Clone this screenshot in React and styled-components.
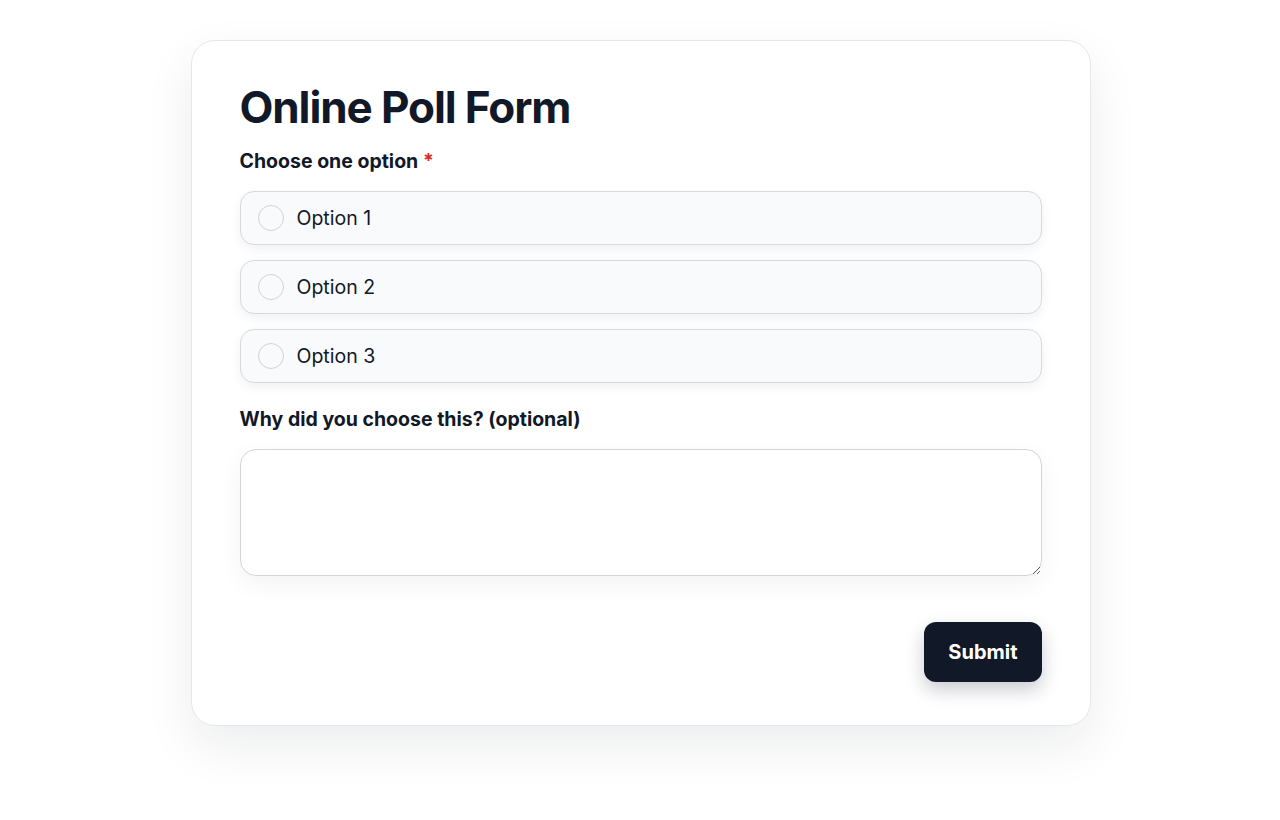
import React from 'react'
import styled, { createGlobalStyle } from 'styled-components'

const GlobalStyle = createGlobalStyle`
  * { box-sizing: border-box; }
  html, body {
    margin: 0;
    background: #ffffff;
    font-family: Inter, "Noto Sans", sans-serif;
    color: #111827;
  }
`

const Page = styled.div`
  min-height: 100vh;
  padding: 40px 0 40px 1px;
  display: flex;
  justify-content: center;
  align-items: flex-start;
`

const Card = styled.form`
  width: 900px;
  padding: 38px 48px 43px 48px;
  background: #ffffff;
  border: 1px solid #e5e7eb;
  border-radius: 24px;
  box-shadow: 0 20px 50px rgba(17, 24, 39, 0.08);
  display: flex;
  flex-direction: column;
`

const Title = styled.h1`
  margin: 0;
  font-size: 44px;
  line-height: 56px;
  font-weight: 700;
  letter-spacing: -0.025em;
  color: #111827;
`

const Label = styled.label`
  display: block;
  margin-top: ${props => props.top || '16px'};
  font-size: 19.5px;
  line-height: 24px;
  font-weight: 650;
  color: #111827;
`

const Required = styled.span`
  color: #dc2626;
`

const Options = styled.div`
  margin-top: 18px;
  display: flex;
  flex-direction: column;
  gap: 15px;
`

const OptionRow = styled.label`
  height: 54px;
  padding: 0 17px;
  display: flex;
  align-items: center;
  gap: 13px;
  background: #f9fafb;
  border: 1.5px solid #d6d9de;
  border-radius: 14px;
  box-shadow: 0 4px 12px rgba(17, 24, 39, 0.06);
  font-size: 19.5px;
  color: #111827;
  cursor: pointer;
`

const Radio = styled.input`
  appearance: none;
  margin: 0;
  width: 26px;
  height: 26px;
  border-radius: 50%;
  border: 1.5px solid #cfd3d9;
  background: #f9fafb;
  flex: none;
`

const TextArea = styled.textarea`
  margin-top: 18px;
  width: 100%;
  height: 127px;
  border: 1.5px solid #d1d5db;
  border-radius: 16px;
  background: #ffffff;
  box-shadow: 0 8px 24px rgba(17, 24, 39, 0.05);
  resize: vertical;
  font: inherit;
  padding: 12px 16px;
  outline: none;
`

const Footer = styled.div`
  margin-top: 46px;
  display: flex;
  justify-content: flex-end;
`

const SubmitButton = styled.button`
  height: 60px;
  padding: 0 24px;
  border: none;
  border-radius: 12px;
  background: #111827;
  color: #ffffff;
  font-family: inherit;
  font-size: 20px;
  font-weight: 700;
  box-shadow: 0 8px 18px rgba(17, 24, 39, 0.22);
  cursor: pointer;
`

const options = ['Option 1', 'Option 2', 'Option 3']

const App = () => {
  return (
    <>
      <GlobalStyle />
      <Page>
        <Card onSubmit={e => e.preventDefault()}>
          <Title>Online Poll Form</Title>
          <Label top={'14px'}>
            Choose one option <Required>*</Required>
          </Label>
          <Options>
            {options.map(opt => (
              <OptionRow key={opt}>
                <Radio type="radio" name="poll" />
                {opt}
              </OptionRow>
            ))}
          </Options>
          <Label top={'24px'}>Why did you choose this? (optional)</Label>
          <TextArea />
          <Footer>
            <SubmitButton type="submit">Submit</SubmitButton>
          </Footer>
        </Card>
      </Page>
    </>
  )
}

export default App
